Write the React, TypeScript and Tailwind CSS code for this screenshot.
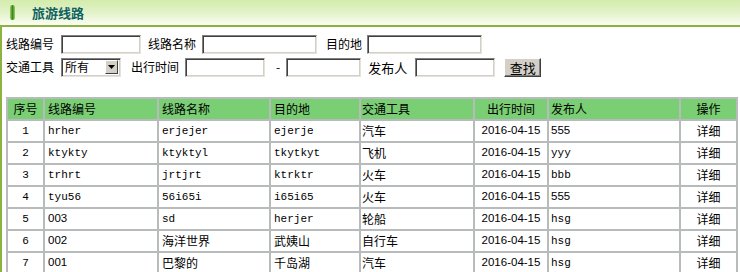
const cjk = "font-['Noto_Sans_CJK_SC',sans-serif]";
const mono = "font-['Liberation_Mono','Noto_Sans_CJK_SC',monospace] text-[11px]";
const sans = "font-['Liberation_Sans','Noto_Sans_CJK_SC',sans-serif] text-[11.5px]";

interface Route {
  no: string;
  code: string;
  name: string;
  dest: string;
  vehicle: string;
  date: string;
  author: string;
}

const routes: Route[] = [
  { no: "1", code: "hrher", name: "erjejer", dest: "ejerje", vehicle: "汽车", date: "2016-04-15", author: "555" },
  { no: "2", code: "ktykty", name: "ktyktyl", dest: "tkytkyt", vehicle: "飞机", date: "2016-04-15", author: "yyy" },
  { no: "3", code: "trhrt", name: "jrtjrt", dest: "ktrktr", vehicle: "火车", date: "2016-04-15", author: "bbb" },
  { no: "4", code: "tyu56", name: "56i65i", dest: "i65i65", vehicle: "火车", date: "2016-04-15", author: "555" },
  { no: "5", code: "003", name: "sd", dest: "herjer", vehicle: "轮船", date: "2016-04-15", author: "hsg" },
  { no: "6", code: "002", name: "海洋世界", dest: "武姨山", vehicle: "自行车", date: "2016-04-15", author: "hsg" },
  { no: "7", code: "001", name: "巴黎的", dest: "千岛湖", vehicle: "汽车", date: "2016-04-15", author: "hsg" },
];

// pick a face per cell, roughly what SimSun does with mixed text
function fontFor(s: string) {
  if (/[\u4e00-\u9fff]/.test(s)) return `${cjk} text-[12px]`;
  if (/^[\d-]+$/.test(s)) return sans;
  return mono;
}

function Input({ w }: { w: string }) {
  return (
    <div
      className={`${w} h-[19px] bg-white border border-t-[#808080] border-l-[#808080] border-b-[#e4e2dc] border-r-[#e4e2dc] shadow-[inset_1px_1px_0_#404040,inset_-1px_-1px_0_#d4d0c8]`}
    />
  );
}

function Select() {
  return (
    <div className="w-[60px] h-[19px] flex items-center bg-white border border-t-[#808080] border-l-[#808080] border-b-[#e4e2dc] border-r-[#e4e2dc] shadow-[inset_1px_1px_0_#404040,inset_-1px_-1px_0_#d4d0c8] pl-[3px] pr-[2px]">
      <span className="flex-1 text-[12px] leading-none">所有</span>
      <div className="w-[13px] h-[14px] bg-[#d4d0c8] border border-t-white border-l-white border-b-[#404040] border-r-[#404040] flex items-center justify-center">
        <svg width="7" height="4" viewBox="0 0 7 4">
          <path d="M0 0h7L3.5 4z" fill="#000" />
        </svg>
      </div>
    </div>
  );
}

export default function App() {
  return (
    <div className={`w-[740px] h-[272px] overflow-hidden bg-white text-black ${cjk}`}>
      <div className="h-[27px] border-b-2 border-[#8cb33f] bg-gradient-to-b from-[#d3ecaa] via-[#e3f2c9] to-[#fafdf3] flex items-center">
        <div className="ml-[10px] w-[5px] h-[15px] rounded-full bg-gradient-to-r from-[#9ccf6a] via-[#3a8a1b] to-[#9ccf6a]" />
        <span className="ml-[17px] text-[13px] font-bold text-[#0f6262] leading-none">旅游线路</span>
      </div>

      <div className="border-l-2 border-[#8cb33f] pl-[4px] pt-[7px] h-[245px]">
        <div className="flex items-center h-[20px] text-[12px] leading-none">
          <span>线路编号</span>
          <div className="ml-[7px]"><Input w="w-[80px]" /></div>
          <span className="ml-[7px]">线路名称</span>
          <div className="ml-[6px]"><Input w="w-[115px]" /></div>
          <span className="ml-[9px]">目的地</span>
          <div className="ml-[5px]"><Input w="w-[115px]" /></div>
        </div>

        <div className="flex items-center h-[20px] mt-[3px] text-[12px] leading-none">
          <span>交通工具</span>
          <div className="ml-[7px]"><Select /></div>
          <span className="ml-[10px]">出行时间</span>
          <div className="ml-[6px]"><Input w="w-[80px]" /></div>
          <span className="ml-[11px]">-</span>
          <div className="ml-[6px]"><Input w="w-[75px]" /></div>
          <span className="ml-[7px] text-[13px]">发布人</span>
          <div className="ml-[8px]"><Input w="w-[80px]" /></div>
          <button className="ml-[9px] w-[37px] h-[19px] bg-[#d4d0c8] border border-t-white border-l-white border-b-[#404040] border-r-[#404040] shadow-[inset_-1px_-1px_0_#808080] text-[13px] leading-none">
            查找
          </button>
        </div>

        <table className="mt-[20px] w-[732px] table-fixed border-separate border-spacing-[2px] bg-[#b7bbbc] text-[12px] leading-none">
          <colgroup>
            <col className="w-[35px]" />
            <col className="w-[112px]" />
            <col className="w-[110px]" />
            <col className="w-[88px]" />
            <col className="w-[112px]" />
            <col className="w-[72px]" />
            <col className="w-[130px]" />
            <col className="w-[55px]" />
          </colgroup>
          <thead>
            <tr className="bg-[#7ace74] h-[20px]">
              <th className="font-normal text-center p-0">序号</th>
              <th className="font-normal text-left p-0 pl-[3px]">线路编号</th>
              <th className="font-normal text-left p-0 pl-[3px]">线路名称</th>
              <th className="font-normal text-left p-0 pl-[3px]">目的地</th>
              <th className="font-normal text-left p-0 pl-[1px]">交通工具</th>
              <th className="font-normal text-center p-0">出行时间</th>
              <th className="font-normal text-left p-0 pl-[2px]">发布人</th>
              <th className="font-normal text-center p-0">操作</th>
            </tr>
          </thead>
          <tbody>
            {routes.map((r) => (
              <tr key={r.no} className="bg-white h-[20px]">
                <td className={`text-center p-0 ${mono}`}>{r.no}</td>
                <td className={`p-0 pl-[3px] ${fontFor(r.code)}`}>{r.code}</td>
                <td className={`p-0 pl-[3px] ${fontFor(r.name)}`}>{r.name}</td>
                <td className={`p-0 pl-[3px] ${fontFor(r.dest)}`}>{r.dest}</td>
                <td className={`p-0 pl-[1px] ${fontFor(r.vehicle)}`}>{r.vehicle}</td>
                <td className={`p-0 text-center ${fontFor(r.date)}`}>{r.date}</td>
                <td className={`p-0 pl-[2px] ${fontFor(r.author)}`}>{r.author}</td>
                <td className="p-0 text-center">详细</td>
              </tr>
            ))}
          </tbody>
        </table>
      </div>
    </div>
  );
}
